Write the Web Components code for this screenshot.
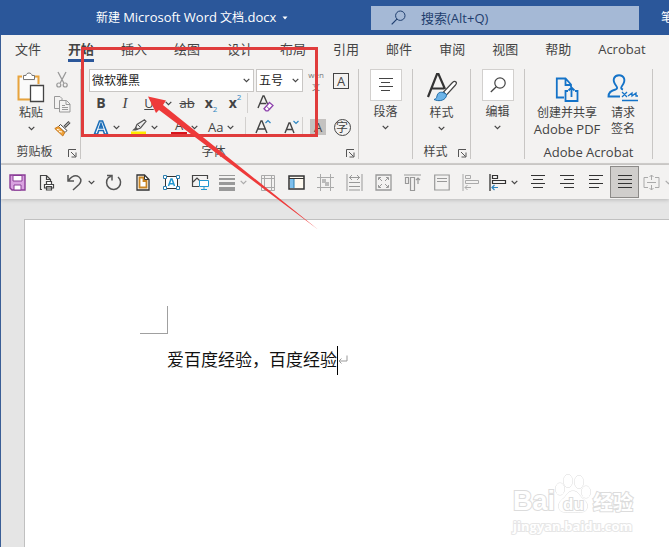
<!DOCTYPE html>
<html lang="zh-CN">
<head>
<meta charset="utf-8">
<title>新建 Microsoft Word 文档.docx</title>
<style>
  html, body { margin: 0; height: 100%; }
  body {
    font-family: "Open Sans", "Noto Sans CJK SC", sans-serif;
    font-size: 12px;
    line-height: 16px;
    color: #444;
    --blue: #2b579a;
    --bar: #f3f2f1;
    --rule: #c8c6c4;
    --accent: #2e86c1;
  }
</style>
</head>
<body>
<word-app></word-app>

<script>
const ICONS = {
  chev: [7, 5, '<path d="M.7.8 3.5 3.6 6.3.8" stroke="#444" stroke-width="1.2"/>'],
  chevGray: [7, 5, '<path d="M.7.8 3.5 3.6 6.3.8" stroke="#aaa" stroke-width="1.2"/>'],
  caret: [6, 4, '<path d="M.5.5h5L3 3.5z" fill="#fff"/>'],
  search: [15, 15, '<circle cx="9.3" cy="5.7" r="4.7" stroke="#1f3e6e"/><path d="M5.9 9.1.7 14.3" stroke="#1f3e6e" stroke-width="1.2"/>'],
  launcher: [9, 9, '<path d="M.5 8V.5H8M3 3l4.5 4.5M8 3.5V8H3.500" stroke="#555"/>'],
  paste: [28, 31, '<path d="M5 4.500H1.500v23H13M18 4.500h3.500V12" stroke="#e8a33d" stroke-width="2"/><path d="M3 6h3v3h12V6h2v7h-7v13H3z" fill="#fafafa"/><path d="M6.500 7.500v-4H9c.4-3.300 5.600-3.300 6 0h2.500v4z" fill="#fff" stroke="#777"/><path d="M13.500 13.500h13v16h-13z" fill="#fff" stroke="#444" stroke-width="1.3"/>'],
  cut: [16, 16, '<path d="M4 0 9.800 11M12 0 6.200 11" stroke="#999" stroke-width="1.3"/><circle cx="4.800" cy="13" r="2" stroke="#999" stroke-width="1.200"/><circle cx="11.200" cy="13" r="2" stroke="#999" stroke-width="1.200"/>'],
  copy: [17, 17, '<path d="M5 12.500H.500V.500H6l2 2V4" stroke="#999"/><path d="M5.500 4.500h7l3.500 3.500v8H5.500zM12 4.500V8.500h4M8 9.500h3M8 11.500h6M8 13.500h6" stroke="#999"/>'],
  brush: [17, 16, '<path d="M15.500 1 10.500 6" stroke="#444" stroke-width="3"/><path d="M15.100 1.400 11 5.500" stroke="#fff"/><path d="M6.500 3.500 13 9.500l-2 2-6.500-6z" fill="#fff" stroke="#444"/><path d="M4.500 5.500 .800 7.500l8 7.500 2-3.500z" fill="#f0a43a" stroke="#c5761d"/><path d="M3 8.500l2.500.5M5 10.500l3 .5" stroke="#fff"/>'],
  effectA: [16, 17, '<path d="M1.500 15 6.500 2h3l5 13h-3l-1.200-3.500H5.700L4.500 15zM6.500 9h3L8 4.500z" stroke="#1d6fb8" stroke-width="1.600" fill="#fff"/>'],
  pen: [16, 17, '<path d="M0 12.500h15V16H0z" fill="#ffeb00"/><path d="M13.500.800 15 2.300 9.500 9 5.800 10.500 4.500 9 6 5.500z" stroke="#555" fill="#eee" stroke-width="1.200"/><path d="M5 8 1 11.500h4L7 10z" fill="#555"/><path d="M6.500 5.500 9.500 8.500" stroke="#555"/>'],
  eraserA: [17, 17, '<path d="M1 13 6 1h1l4 9M3 8.500h6" stroke="#444" stroke-width="1.400"/><path d="M12.500 7.500 16 10.500 11 15.800H9l-2-2z" stroke="#8e44ad" stroke-width="1.300" fill="#fff"/><path d="M9.500 11.200 12.500 14.200" stroke="#8e44ad"/>'],
  growA: [17, 17, '<path d="M1 14 6 2h1l5 12M3 10h7" stroke="#444" stroke-width="1.400"/><path d="M10.500 4 13 1.500 15.500 4" stroke="#2e86c1" stroke-width="1.200"/>'],
  shrinkA: [15, 17, '<path d="M1 14 5 4h1l4 10M2.500 10.500h6" stroke="#444" stroke-width="1.400"/><path d="M9.500 2 12 4.500 14.500 2" stroke="#2e86c1" stroke-width="1.200"/>'],
  paraLines: [16, 16, '<path d="M1 1.500h14M3 5.500h9M1 9.500h14M3 13.500h9" stroke="#444"/>'],
  find: [16, 16, '<circle cx="10" cy="6" r="5.200" stroke="#444" stroke-width="1.200"/><path d="M6.300 9.700.800 15" stroke="#444" stroke-width="1.300"/>'],
  styleA: [32, 31, '<path d="M2 25 11 2h1.500L19 17M6 16.500h12" stroke="#333" stroke-width="2.200"/><path d="M30 10c-1-1-2.500-.500-3.500.500l-9 9.500 3 3 9-10c.8-1 1.300-2.200.500-3z" fill="#fff" stroke="#444" stroke-width="1.200"/><path d="M17 20.500c-3-1-5.500.500-6 3.500-.3 2-1 3-3 3.500 4 2 10 1.500 12-2.500.7-1.500.500-3-.500-3.500z" fill="#6db4e8" stroke="#236ea9"/>'],
  pdf: [24, 26, '<path d="M9 20.500H1.800v-19h8.700L16 7.500V10M10.500 2v6H16" stroke="#1473c8" stroke-width="1.800"/><path d="M13 14h-2.500v10h12V14H20M16.500 20v-9M13.500 13.500l3-3 3 3" stroke="#1473c8" stroke-width="1.800"/>'],
  sign: [32, 29, '<path d="M13 22.500H1.500c0-4 2.500-6 7-7 2-.500 2-2 .8-3.500C4.500 6 7 1.200 12 1.200s7.500 5 3 10.800c-1.500 2-.8 3 1 3.500" stroke="#1473c8" stroke-width="1.900"/><path d="M15 18l5 5M20 18l-5 5M21 22l4-3v3l4-3v3h2M15 26.500h16" stroke="#1473c8" stroke-width="1.300"/>'],
  save: [17, 17, '<path d="M1 1h15v15H3l-2-2z" fill="#d9a3e0" stroke="#8a3c96" stroke-width="1.400"/><path d="M4 1.500h9V7H4z" fill="#fff" stroke="#8a3c96"/><path d="M5 11h7v5H5z" fill="#fff" stroke="#8a3c96"/>'],
  print: [16, 17, '<path d="M3 15.500H1.500V1.500h6l4 4V7M7.500 1.500v4h4" stroke="#444" stroke-width="1.200"/><path d="M7.500 10V7.500h5V10M5.500 14v-3.500h9V14zM7.500 12.500h5v3.500h-5z" stroke="#444" fill="#fff" stroke-width="1.200"/>'],
  undo: [18, 17, '<path d="M3 1v6h6M3.500 6.500C7 2 11 .800 14 3c3 2.500 2 5.500 0 7.500L8 16" stroke="#555" stroke-width="1.500"/>'],
  redo: [17, 17, '<path d="M2 1.500h5v5" stroke="#555" stroke-width="1.500"/><path d="M13 3a7 7 0 1 1-9.500.6L6.500 2" stroke="#555" stroke-width="1.500"/>'],
  sheet: [14, 17, '<path d="M1 1h7.500L13 5.500V16H1z" stroke="#333" stroke-width="1.300" fill="#fff"/><path d="M3.500 3.500h4v3.500h3v6.500h-7z" stroke="#c98524" stroke-width="1.800"/><path d="M8.500 1v4.500H13" stroke="#333"/>'],
  textBox: [17, 15, '<path d="M2.500 1.500h12v12h-12z" stroke="#333" fill="#fff"/><path d="M5.500 11 8 4h1l2.500 7M6.500 8.800h4" stroke="#2196cf" stroke-width="1.500"/><g fill="#fff" stroke="#2b7fb0"><path d="M.500.500h3v3h-3zM13.500.500h3v3h-3zM.500 11.500h3v3h-3zM13.500 11.500h3v3h-3z"/></g>'],
  picture: [17, 16, '<path d="M7 12.500H.500v-11h15V5M1 8l4-4 3.500 3.500" stroke="#444" stroke-width="1.200"/><path d="M7.500 6.500h9v6h-9zM12 12.500v2.500M9 15.500h6" stroke="#2196cf" fill="#fff"/>'],
  weights: [16, 17, '<path d="M0 1.500h16" stroke="#999"/><path d="M0 5h16" stroke="#999" stroke-width="2"/><path d="M0 9.500h16" stroke="#999" stroke-width="3"/><path d="M0 15h16" stroke="#999" stroke-width="4"/>'],
  grid: [14, 17, '<path d="M.500 1.500h13v15H.500zM3.500 1.500v15M10.500 1.500v15M.500 4.500h13M.500 13.500h13" stroke="#aaa"/>'],
  pane: [17, 15, '<path d="M1 1h15v13H1z" stroke="#333" stroke-width="1.500" fill="#fffaf0"/><path d="M2 4h4v9H2z" fill="#7fc0ec"/><path d="M1 3.500h15" stroke="#333"/><path d="M6 4v9" stroke="#2b7fb0"/>'],
  crop: [17, 17, '<path d="M3.500 0v17M13.500 0v17M0 3.500h17M0 13.500h17" stroke="#aaa"/><path d="M5 5h4v4H5zM8 8h4v4H8z" fill="#bbb"/>'],
  width: [17, 17, '<path d="M1 0v17M16 0v17M3 3.500h11M6 1 3.500 3.500 6 6M11 1l2.500 2.500L11 6M3 8.500h11M3 12.500h11M3 16h11" stroke="#999"/>'],
  expand: [17, 17, '<path d="M1 1h15v15H1z" stroke="#999" stroke-width="1.300"/><path d="M3.500 6V3.500H6M11 3.500h2.500V6M3.500 11v2.500H6M13.500 11v2.500H11M4 4l3 3M13 4l-3 3M4 13l3-3M13 13l-3-3" stroke="#999"/>'],
  alignTop: [17, 17, '<path d="M0 1h17M1.500 3.500h3v6h-3zM6.500 3.500h4v13h-4zM14 10V4M12 6l2-2 2 2" stroke="#999" stroke-width="1.200"/>'],
  note: [16, 17, '<path d="M.700 1h14.500v15H.700z" stroke="#999" stroke-width="1.200"/><path d="M3 4.500h10M3 7.500h10" stroke="#999"/>'],
  alignObj: [17, 17, '<path d="M1 0v17" stroke="#aaa"/><path d="M3.500 1.500h5v3h-5zM3.500 6.500h13v3h-13zM9 13.500H3M5.500 11 3 13.500 5.500 16" stroke="#aaa"/>'],
  alignObjOn: [17, 17, '<path d="M1 0v17" stroke="#333" stroke-width="1.300"/><path d="M3.500 1.500h5v3h-5zM3.500 6.500h13v3h-13z" stroke="#333" stroke-width="1.200"/><path d="M9 13.500H3M5.500 11 3 13.500 5.500 16" stroke="#2e86c1" stroke-width="1.200"/>'],
  center: [14, 14, '<path d="M0 .500h14M2 4.500h10M0 8.500h14M2 12.500h10" stroke="#333"/>'],
  right: [14, 14, '<path d="M0 .500h14M4 4.500h10M0 8.500h14M4 12.500h10" stroke="#333"/>'],
  left: [14, 14, '<path d="M0 .500h14M0 4.500h10M0 8.500h14M0 12.500h10" stroke="#333"/>'],
  justify: [14, 14, '<path d="M0 .500h14M0 4.500h14M0 8.500h14M0 12.500h14" stroke="#333"/>'],
  splitCell: [17, 17, '<path d="M5 3.500H1v10h4M12 3.500h4v10h-4M8.500 1v5M6.500 3l2-2 2 2M8.500 11v5M6.500 14l2 2 2-2M4 8.500h9" stroke="#aaa"/>'],
  mark: [10, 10, '<path d="M9 .500v5.500H1M3.500 3.500 1 6l2.500 2.500" stroke="#999"/>']
};

function define(tag, css, html, setup) {
  const tpl = document.createElement('template');
  tpl.innerHTML = `<style>*{box-sizing:border-box}button{appearance:none;border:0;background:none;padding:0;margin:0;font:inherit;color:inherit}${css}</style>${html}`;
  customElements.define(tag, class extends HTMLElement {
    connectedCallback() {
      if (this.shadowRoot) return;
      const root = this.attachShadow({ mode: 'open' });
      root.append(tpl.content.cloneNode(true));
      if (setup) setup(this, root);
    }
  });
}

define('ui-icon', `:host{display:inline-flex;flex:none}svg{display:block;overflow:visible}`, '', (el, root) => {
  const [w, h, body] = ICONS[el.getAttribute('name')];
  root.innerHTML += `<svg width="${w}" height="${h}" viewBox="0 0 ${w} ${h}" fill="none" aria-hidden="true">${body}</svg>`;
});

define('title-bar', `
  :host{display:grid;grid-template-columns:minmax(0,371fr) minmax(0,268fr) minmax(0,30fr);align-items:center;height:35px;flex:none;background:var(--blue);color:#fff;overflow:hidden}
  .name{display:flex;align-items:center;gap:6px;padding-left:96px;white-space:nowrap}
  .lat{font-size:13px}
  .search{display:flex;align-items:center;gap:15px;height:24px;padding-left:20px;background:#a5b9d6}
  input{flex:1;min-width:0;border:0;outline:0;background:none;padding:0;font:inherit;font-size:13px;color:#1f3e6e}
  input::placeholder{color:#1f3e6e;opacity:1}
  .user{padding-left:22px;white-space:nowrap}`,
  `<button class="name"><span>新建 <span class="lat">Microsoft Word</span> 文档<span class="lat">.docx</span></span><ui-icon name="caret"></ui-icon></button>
   <label class="search"><ui-icon name="search"></ui-icon><input aria-label="搜索" placeholder="搜索(Alt+Q)"></label>
   <span class="user">笔</span>`);

define('ribbon-tab', `
  :host{display:block;flex:none}
  button{display:block;height:27px;padding-top:5px;font-size:13px;line-height:19px;border-bottom:3px solid transparent}
  :host([selected]) button{font-weight:700;border-color:var(--blue)}`,
  `<button role="tab"><slot></slot></button>`);

define('ribbon-tabs', `
  :host{display:flex;gap:27px;height:31px;flex:none;padding-left:14px;background:var(--bar);overflow:hidden}`, `<slot></slot>`);

define('ribbon-group', `
  :host{display:flex;flex-direction:column;flex:none;height:90px;border-right:1px solid var(--rule)}
  .body{flex:1;min-height:0}
  footer{display:flex;align-items:center;height:14px;padding-right:3px}
  .label{flex:1;text-align:center;white-space:nowrap}
  :host([wide]) .label{font-size:13px}
  :host([wide]) footer{padding:0}
  footer button{display:flex;padding-top:2px}`,
  `<div class="body"><slot></slot></div><footer><span class="label"></span></footer>`, (el, root) => {
    root.querySelector('.label').textContent = el.getAttribute('label') || '';
    if (el.hasAttribute('launch')) root.querySelector('footer').insertAdjacentHTML('beforeend',
      `<button aria-label="${el.getAttribute('label')}设置"><ui-icon name="launcher"></ui-icon></button>`);
  });

define('big-button', `
  :host{display:block;flex:none}
  button{display:flex;flex-direction:column;align-items:center;width:100%}
  .pic{display:flex;align-items:flex-end;justify-content:center;height:36px;padding-bottom:2px}
  :host([boxed]) .pic{width:32px;height:32px;margin-bottom:3px;padding:0;align-items:center;background:#fff;border:1px solid #d2d0ce}
  .more{margin-top:5px}`,
  `<button><span class="pic"></span><slot></slot></button>`, (el, root) => {
    root.querySelector('.pic').innerHTML = `<ui-icon name="${el.getAttribute('icon')}"></ui-icon>`;
    if (el.hasAttribute('more')) root.querySelector('button').insertAdjacentHTML('beforeend', '<ui-icon class="more" name="chev"></ui-icon>');
  });

define('clipboard-tools', `
  :host{display:grid;grid-template-columns:46px 17px;padding-left:7px}
  .small{display:flex;flex-direction:column;gap:8px;padding-top:3px}
  .small button{display:flex}`,
  `<big-button icon="paste" more>粘贴</big-button>
   <div class="small"><button aria-label="剪切"><ui-icon name="cut"></ui-icon></button><button aria-label="复制"><ui-icon name="copy"></ui-icon></button><button aria-label="格式刷"><ui-icon name="brush"></ui-icon></button></div>`);

define('combo-box', `
  :host{display:grid;flex:none;align-items:center;height:23px;background:#fff;border:1px solid #c8c6c4}
  select{grid-area:1/1;appearance:none;border:0;outline:0;background:none;width:100%;height:21px;padding:0 2px;font:inherit;color:#222}
  ui-icon{grid-area:1/1;justify-self:end;margin-right:3px;pointer-events:none}`,
  `<select></select><ui-icon name="chev"></ui-icon>`, (el, root) => {
    const s = root.querySelector('select');
    s.setAttribute('aria-label', el.getAttribute('label'));
    s.add(new Option(el.getAttribute('value')));
  });

define('font-tools', `
  :host{display:block;padding-left:8px}
  .row{display:flex;align-items:center;height:22px}
  .row.first{height:23px}
  .row.last{height:26px}
  .face{width:165px;margin-right:2px}.size{width:47px}
  button{display:flex;align-items:center;justify-content:center;flex:none;width:24px;height:20px;font-size:13px;color:#444}
  .c{width:14px}
  b{font-size:14px}
  i{font-family:"Liberation Serif",serif;font-size:15px}
  .wen{flex-direction:column;width:26px;font-size:8px;line-height:12px;color:#777}
  .boxed span{width:16px;height:16px;border:1px solid #444;line-height:14px}
  .ring{width:18px}
  .ring span{width:17px;height:17px;border:1px solid #444;border-radius:50%;font-size:12px;line-height:15px}
  .shade{width:30px}
  .shade span{width:16px;height:16px;background:#c4c2c0;line-height:16px}
  .pair{width:39px;justify-content:flex-start;gap:4px;padding-left:4px}
  .pair.hl{padding-left:3px}
  .pair.aa{padding-left:2px}
  .red span{width:16px;height:16px;line-height:13px;border-bottom:3px solid #d8141c}
  small{font-size:8px;line-height:8px;color:var(--accent)}
  .sub small{align-self:flex-end}.sup small{align-self:flex-start}
  .sep{width:1px;height:20px;background:#d2d0ce;flex:none}
  .grow{width:34px}.shrink{width:22px}`,
  `<div class="row first"><combo-box class="face" label="字体" value="微软雅黑"></combo-box><combo-box class="size" label="字号" value="五号"></combo-box><button class="wen" aria-label="拼音指南"><span>wén</span><span>文</span></button><button class="boxed" aria-label="字符边框"><span>A</span></button></div>
   <div class="row"><button aria-label="加粗"><b>B</b></button><button aria-label="倾斜"><i>I</i></button><button aria-label="下划线"><u>U</u></button><button class="c" aria-label="下划线选项"><ui-icon name="chev"></ui-icon></button><button aria-label="删除线"><s>ab</s></button><button class="sub" aria-label="下标"><b>x</b><small>2</small></button><button class="sup" aria-label="上标"><b>x</b><small>2</small></button><span class="sep"></span><button class="grow" aria-label="清除格式"><ui-icon name="eraserA"></ui-icon></button></div>
   <div class="row last"><button class="pair" aria-label="文本效果"><ui-icon name="effectA"></ui-icon><ui-icon name="chev"></ui-icon></button><button class="pair hl" aria-label="突出显示"><ui-icon name="pen"></ui-icon><ui-icon name="chev"></ui-icon></button><button class="pair red" aria-label="字体颜色"><span>A</span><ui-icon name="chev"></ui-icon></button><button class="pair aa" aria-label="更改大小写">Aa<ui-icon name="chev"></ui-icon></button><div class="sep"></div><button class="grow" aria-label="增大字号"><ui-icon name="growA"></ui-icon></button><button class="shrink" aria-label="减小字号"><ui-icon name="shrinkA"></ui-icon></button><div class="sep"></div><button class="shade" aria-label="字符底纹"><span>A</span></button><button class="ring" aria-label="带圈字符"><span>字</span></button></div>`);

define('ribbon-bar', `
  :host{display:flex;flex:none;box-sizing:border-box;padding-top:3px;height:99px;background:var(--bar);border-bottom:2px solid #d2d0ce;overflow:hidden}
  ribbon-group{box-sizing:border-box}
  .clip{width:80px}.font{width:278px}.one{width:54px}.style{width:58px}
  .acro{width:128px}
  .pair{display:grid;grid-template-columns:66px 46px;padding-left:9px}
  .lat{font-size:13px;white-space:nowrap}`,
  `<ribbon-group class="clip" label="剪贴板" launch><clipboard-tools></clipboard-tools></ribbon-group>
   <ribbon-group class="font" label="字体" launch><font-tools></font-tools></ribbon-group>
   <ribbon-group class="one"><big-button icon="paraLines" boxed more>段落</big-button></ribbon-group>
   <ribbon-group class="style" label="样式" launch><big-button icon="styleA" more>样式</big-button></ribbon-group>
   <ribbon-group class="one"><big-button icon="find" boxed more>编辑</big-button></ribbon-group>
   <ribbon-group class="acro" label="Adobe Acrobat" wide><div class="pair"><big-button icon="pdf"><span>创建并共享</span><span class="lat">Adobe PDF</span></big-button><big-button icon="sign"><span>请求</span><span>签名</span></big-button></div></ribbon-group>`);

define('tool-button', `
  :host{display:flex;flex:none;width:29px;height:32px}
  button{display:flex;align-items:center;justify-content:center;width:100%;height:100%}
  :host([split]){width:38px}
  :host([split]) button{justify-content:flex-start;gap:5px;padding-left:4px}
  :host([pressed]) button{background:#d0cecc;border:1px solid #8c8a88}`,
  `<button></button>`, (el, root) => {
    const b = root.querySelector('button');
    b.setAttribute('aria-label', el.getAttribute('label'));
    b.innerHTML = `<ui-icon name="${el.getAttribute('icon')}"></ui-icon>` +
      (el.hasAttribute('split') ? `<ui-icon name="${el.getAttribute('split') || 'chev'}"></ui-icon>` : '');
  });

define('quick-bar', `
  :host{display:flex;align-items:center;flex:none;height:34px;padding-left:2px;background:var(--bar);overflow:hidden;box-shadow:0 1px 4px #0003;position:relative}`,
  `<slot></slot>`);

define('document-page', `
  :host{display:block;flex:1;min-height:0;padding:20px 0 0 23px;background:#e5e5e5;overflow:hidden}
  .sheet{height:100%;background:#fff;border:1px solid #c0c0c0;border-width:1px 0 0 1px;padding:86px 0 0 115px}
  .corner{width:28px;height:28px;border:1px solid #a0a0a0;border-width:0 1px 1px 0}
  .line{display:flex;align-items:center;margin:11px 0 0 27px;height:30px;font-size:17px;color:#111;white-space:nowrap}
  .line i{width:1px;height:29px;background:#000}`,
  `<div class="sheet"><div class="corner"></div><div class="line"><slot></slot><i></i><ui-icon name="mark"></ui-icon></div></div>`);

define('site-watermark', `
  :host{position:absolute;right:36px;bottom:12px;color:#fff;-webkit-text-stroke:2px #dcdcdc;paint-order:stroke fill;font-weight:700}
  .top{display:flex;align-items:flex-end;justify-content:space-between;width:120px;height:42px}
  .bai{font-family:"Liberation Sans",sans-serif;font-size:27px;line-height:30px}
  .cn{font-size:20px;line-height:26px}
  .url{font-size:13px;line-height:18px;padding-top:1px;-webkit-text-stroke:2px #e6e6e6}
  svg{display:block;overflow:visible}
  text{font-family:"Liberation Sans",sans-serif;-webkit-text-stroke:0}`,
  `<div class="top"><span class="bai">Bai</span><svg width="36" height="42" viewBox="0 0 36 42" fill="#fff" stroke="#dcdcdc"><ellipse cx="4" cy="15" rx="4.500" ry="6"/><ellipse cx="12" cy="7" rx="4.500" ry="6.500"/><ellipse cx="23" cy="8" rx="4.500" ry="6.500"/><ellipse cx="30" cy="18" rx="4.500" ry="6"/><path d="M17 17c-5 0-6 4-9 7-4 3-6 6-5 10 1 5 6 4 14 4s13 1 14-4c1-4-1-7-5-10-3-3-4-7-9-7z"/><text x="7" y="36" font-size="17" stroke-width="2" paint-order="stroke">du</text></svg><span class="cn">经验</span></div>
   <div class="url">jingyan.baidu.com</div>`);

define('red-callout', `
  :host{position:absolute;left:0;top:0;pointer-events:none}
  svg{display:block}`,
  `<svg width="330" height="240" viewBox="0 0 330 240" aria-hidden="true"><path d="M82.500 48.500h234v87h-234z" fill="none" stroke="#e03c3c" stroke-width="3"/><path d="M148 96.500 166 100.500 163 105 318 229.500 159 110 156 113z" fill="#ee3a3a"/></svg>`);

define('word-app', `
  :host{display:flex;flex-direction:column;position:relative;height:100vh;overflow:hidden}
  .main{display:flex;flex-direction:column;flex:1;min-height:0;border-left:1px solid #3a5e96}`,
  `<title-bar></title-bar>
   <div class="main">
   <ribbon-tabs role="tablist"><ribbon-tab>文件</ribbon-tab><ribbon-tab selected>开始</ribbon-tab><ribbon-tab>插入</ribbon-tab><ribbon-tab>绘图</ribbon-tab><ribbon-tab>设计</ribbon-tab><ribbon-tab>布局</ribbon-tab><ribbon-tab>引用</ribbon-tab><ribbon-tab>邮件</ribbon-tab><ribbon-tab>审阅</ribbon-tab><ribbon-tab>视图</ribbon-tab><ribbon-tab>帮助</ribbon-tab><ribbon-tab>Acrobat</ribbon-tab></ribbon-tabs>
   <ribbon-bar></ribbon-bar>
   <quick-bar>
     <tool-button icon="save" label="保存"></tool-button><tool-button icon="print" label="打印"></tool-button><tool-button icon="undo" split label="撤消"></tool-button><tool-button icon="redo" label="重复"></tool-button><tool-button icon="sheet" label="页面"></tool-button><tool-button icon="textBox" label="文本框"></tool-button><tool-button icon="picture" label="图片"></tool-button><tool-button icon="weights" split="chevGray" label="线条粗细"></tool-button><tool-button icon="grid" label="边框"></tool-button><tool-button icon="pane" label="导航窗格"></tool-button><tool-button icon="crop" label="裁剪"></tool-button><tool-button icon="width" label="宽度"></tool-button><tool-button icon="expand" label="适应"></tool-button><tool-button icon="alignTop" label="顶端对齐"></tool-button><tool-button icon="note" label="批注"></tool-button><tool-button icon="alignObj" label="左对齐对象"></tool-button><tool-button icon="alignObjOn" split label="对齐"></tool-button><tool-button icon="center" label="居中"></tool-button><tool-button icon="right" label="右对齐"></tool-button><tool-button icon="left" label="左对齐"></tool-button><tool-button icon="justify" pressed label="两端对齐"></tool-button><tool-button icon="splitCell" split="chevGray" label="拆分"></tool-button>
   </quick-bar>
   <document-page>爱百度经验，百度经验</document-page>
   </div>
   <site-watermark></site-watermark>
   <red-callout></red-callout>`);
</script>
</body>
</html>
